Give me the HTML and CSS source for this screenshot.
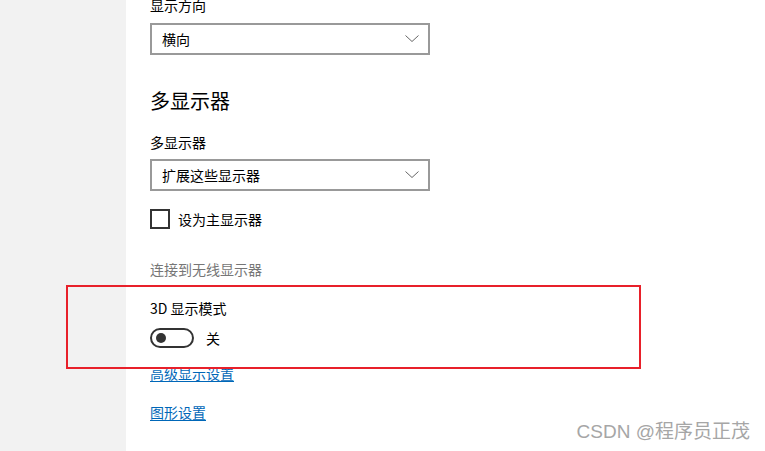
FILE: index.html
```html
<!DOCTYPE html>
<html lang="zh-CN">
<head>
<meta charset="utf-8">
<title>显示设置</title>
<link rel="stylesheet" href="styles.css">
</head>
<body>
<div class="window">
  <aside class="sidebar"></aside>
  <main class="content">
    <div class="label first">显示方向</div>
    <div class="select">
      <span class="select-text">横向</span>
      <svg class="chevron" width="14" height="8" viewBox="0 0 14 8"><polyline points="0.5,0.5 7,6.5 13.5,0.5" fill="none" stroke="#666" stroke-width="1"/></svg>
    </div>

    <h2 class="heading">多显示器</h2>
    <div class="label label-2">多显示器</div>
    <div class="select select-2">
      <span class="select-text">扩展这些显示器</span>
      <svg class="chevron" width="14" height="8" viewBox="0 0 14 8"><polyline points="0.5,0.5 7,6.5 13.5,0.5" fill="none" stroke="#666" stroke-width="1"/></svg>
    </div>

    <label class="check-row">
      <span class="checkbox"></span>
      <span class="check-text">设为主显示器</span>
    </label>

    <div class="muted">连接到无线显示器</div>

    <div class="label label-3d">3D 显示模式</div>
    <div class="toggle-row">
      <span class="toggle"><span class="knob"></span></span>
      <span class="toggle-text">关</span>
    </div>

    <a class="link link-1" href="#">高级显示设置</a>
    <a class="link link-2" href="#">图形设置</a>
  </main>
  <div class="highlight"></div>
  <div class="watermark">CSDN @程序员正茂</div>
</div>
</body>
</html>
```
FILE: styles.css
```css
html, body {
  margin: 0;
  padding: 0;
  background: #ffffff;
}

body {
  font-family: "Microsoft YaHei", "Noto Sans CJK SC", "Noto Sans", sans-serif;
  font-size: 14px;
  color: #000;
  overflow: hidden;
}

.window {
  position: relative;
  display: flex;
  width: 765px;
  height: 451px;
  overflow: hidden;
}

.sidebar {
  width: 126px;
  flex: none;
  background: #f2f2f2;
}

.content {
  flex: 1;
  display: flex;
  flex-direction: column;
  align-items: flex-start;
  padding-left: 24px;
  margin-top: -5px;
}

.label {
  line-height: 20px;
  font-size: 14px;
}

.select {
  box-sizing: border-box;
  width: 280px;
  height: 32px;
  border: 2px solid #999;
  margin-top: 8px;
  display: flex;
  align-items: center;
  justify-content: space-between;
  padding: 0 9px 0 10px;
}

.select-2 {
  margin-top: 7px;
}

.select-text {
  font-size: 14px;
  line-height: 20px;
}

.chevron {
  display: block;
  margin-bottom: 1px;
}

.heading {
  margin: 32px 0 0;
  font-size: 20px;
  font-weight: normal;
  line-height: 28px;
}

.label-2 {
  margin-top: 17px;
}

.check-row {
  display: flex;
  align-items: center;
  margin-top: 18px;
}

.checkbox {
  box-sizing: border-box;
  width: 20px;
  height: 20px;
  border: 2px solid #333;
}

.check-text {
  margin-left: 8px;
  line-height: 20px;
}

.muted {
  margin-top: 30px;
  line-height: 20px;
  color: #767676;
}

.label-3d {
  margin-top: 19px;
}

.toggle-row {
  display: flex;
  align-items: center;
  margin-top: 10px;
}

.toggle {
  box-sizing: border-box;
  width: 44px;
  height: 20px;
  border: 2px solid #333;
  border-radius: 10px;
  display: flex;
  align-items: center;
  padding-left: 4px;
}

.knob {
  width: 10px;
  height: 10px;
  border-radius: 50%;
  background: #333;
}

.toggle-text {
  margin-left: 12px;
  line-height: 20px;
}

.link {
  color: #0067b8;
  text-decoration: underline;
  text-underline-offset: 2px;
  line-height: 20px;
}

.link-1 {
  margin-top: 15px;
}

.link-2 {
  margin-top: 19px;
}

.highlight {
  position: absolute;
  left: 66px;
  top: 285px;
  width: 571px;
  height: 80px;
  border: 2px solid #e8202a;
  pointer-events: none;
}

.watermark {
  position: absolute;
  right: 15px;
  top: 420px;
  font-size: 19px;
  line-height: 24px;
  color: #a6a6a6;
  font-family: "Liberation Sans", "Noto Sans CJK SC", sans-serif;
}
```
